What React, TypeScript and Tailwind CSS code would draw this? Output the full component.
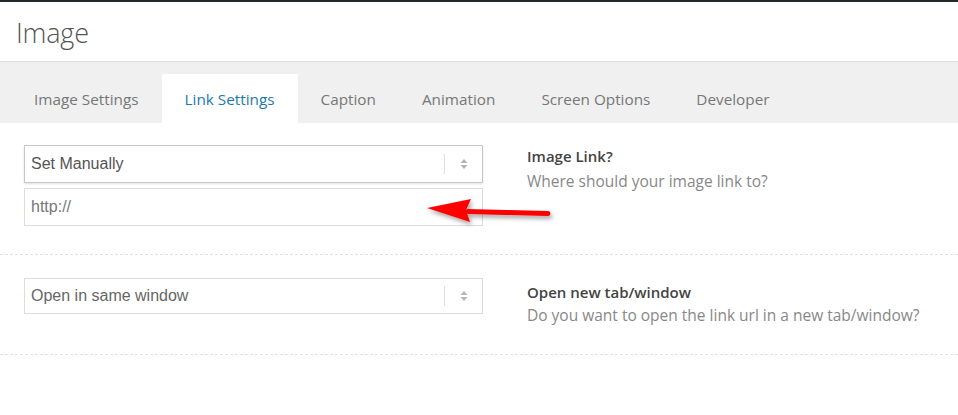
import React from "react";

const tabs = ["Image Settings", "Link Settings", "Caption", "Animation", "Screen Options", "Developer"];

function UpDown() {
  return (
    <svg width="8" height="12" viewBox="0 0 8 12" className="block">
      <path d="M4 1 L7.5 5 L0.5 5 Z" fill="#b5b5b5" />
      <path d="M4 11 L7.5 7 L0.5 7 Z" fill="#b5b5b5" />
    </svg>
  );
}

function SelectBox({ text, strong }: { text: string; strong?: boolean }) {
  return (
    <div
      className={
        "flex items-center bg-white pl-[6px] " +
        (strong
          ? "h-[38px] border border-[#c8c8c8] shadow-[0_1px_2px_rgba(0,0,0,0.12)] text-[#555]"
          : "h-[36px] border border-[#dcdcdc] text-[#666]")
      }
      style={{ fontFamily: '"Liberation Sans", Arial, sans-serif' }}
    >
      <span className="flex-1 text-[16px]">{text}</span>
      <span className="h-[20px] w-px bg-[#e0e0e0]" />
      <span className="w-[37px] flex justify-center">
        <UpDown />
      </span>
    </div>
  );
}

export default function App() {
  return (
    <div
      className="relative w-[958px] h-[415px] bg-white overflow-hidden"
      style={{ fontFamily: '"Open Sans", "Noto Sans", sans-serif' }}
    >
      <div className="h-[2px] bg-[#23282d]" />
      <div className="h-[60px] border-b border-[#dcdcdc] flex items-center pl-[16px] pt-[3px]">
        <h1 className="text-[27px] font-light text-[#555] tracking-[-0.2px]">Image</h1>
      </div>
      <div className="bg-[#f0f0f0] h-[61px] pt-[12px] pl-[11px] flex">
        {tabs.map((t) => (
          <div
            key={t}
            className={
              "h-[49px] px-[23px] flex items-center pt-[1px] text-[15.3px] " +
              (t === "Link Settings" ? "bg-white text-[#1b7aad]" : "text-[#777]")
            }
          >
            {t}
          </div>
        ))}
      </div>

      <div className="border-b border-dashed border-[#e2e2e2] pt-[22px] pb-[28px] flex">
        <div className="ml-[24px] w-[459px] flex flex-col gap-[5px]">
          <SelectBox text="Set Manually" strong />
          <div
            className="h-[38px] border border-[#dcdcdc] flex items-center pl-[6px] text-[16px] text-[#777]"
            style={{ fontFamily: '"Liberation Sans", Arial, sans-serif' }}
          >
            http://
          </div>
        </div>
        <div className="ml-[44px]">
          <div className="text-[15px] font-semibold text-[#444] leading-[23px]">Image Link?</div>
          <div className="text-[15.5px] text-[#888] leading-[26px]">Where should your image link to?</div>
        </div>
      </div>

      <div className="border-b border-dashed border-[#e2e2e2] pt-[23px] pb-[27px] flex">
        <div className="ml-[24px] w-[459px]">
          <SelectBox text="Open in same window" />
        </div>
        <div className="ml-[44px] pt-[3px]">
          <div className="text-[15px] font-semibold text-[#444] leading-[23px]">Open new tab/window</div>
          <div className="text-[15.5px] text-[#888] leading-[23px]">Do you want to open the link url in a new tab/window?</div>
        </div>
      </div>

      <svg className="absolute left-[420px] top-[192px]" width="140" height="40" viewBox="0 0 140 40">
        <defs>
          <filter id="sh" x="-20%" y="-50%" width="140%" height="200%">
            <feDropShadow dx="2" dy="3" stdDeviation="2" floodColor="#000" floodOpacity="0.35" />
          </filter>
        </defs>
        <g filter="url(#sh)">
          <path d="M48 19.5 L128 21.5" stroke="#ff0000" strokeWidth="5" strokeLinecap="round" />
          <path d="M7 16 L51 7 L46 18 L50 30 Z" fill="#ff0000" />
        </g>
      </svg>
    </div>
  );
}
